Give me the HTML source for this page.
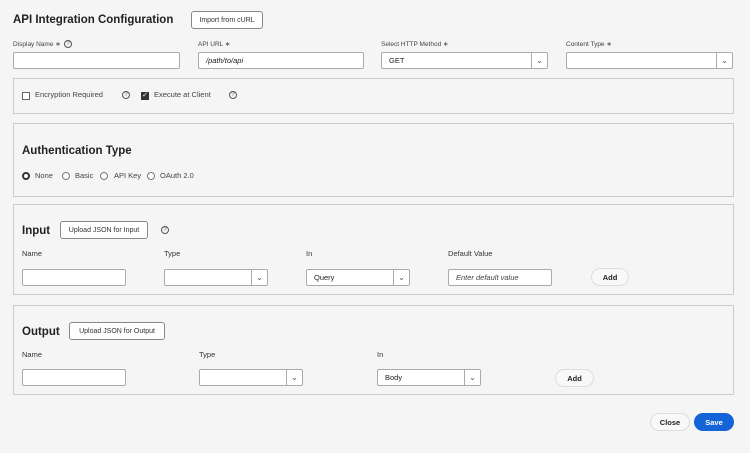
<!DOCTYPE html><html><head><style>
*{box-sizing:border-box;margin:0;padding:0}
body{width:750px;height:453px;background:#f5f5f5;font-family:"Liberation Sans",sans-serif;color:#222;position:relative;overflow:hidden}
.a{position:absolute}
.lbl{position:absolute;font-size:6.5px;color:#444}
.lbl2{position:absolute;font-size:7.5px;color:#333}
.in{position:absolute;background:#fff;border:1px solid #aaa;border-radius:2px;font-size:7.5px;padding-left:7px;display:flex;align-items:center;color:#222}
.sel .sp{position:absolute;right:0;top:0;bottom:0;width:16px;border-left:1px solid #aaa;display:flex;align-items:center;justify-content:center;font-size:8px;color:#555}
.box{position:absolute;left:13px;width:721px;border:1px solid #ccc;}
.btn{position:absolute;background:#fff;border:1px solid #888;border-radius:3px;font-size:7px;display:flex;align-items:center;justify-content:center;color:#333;white-space:nowrap}
.pill{position:absolute;background:#f8f8f8;border:1px solid #ddd;border-radius:10px;font-size:7.5px;font-weight:bold;display:flex;align-items:center;justify-content:center}
.h{position:absolute;font-weight:bold;white-space:nowrap}
.q{position:absolute;width:8px;height:8px;border:1px solid #555;border-radius:50%;font-size:6px;line-height:6px;text-align:center;color:#555}
.rad{position:absolute;width:8px;height:8px;border:1px solid #777;border-radius:50%;background:#fff}
.rt{position:absolute;font-size:7.5px;color:#444;white-space:nowrap}
</style></head><body>
<div class="h" style="left:13px;top:14px;font-size:11.5px">API Integration Configuration</div>
<div class="btn" style="left:191px;top:11px;width:72px;height:18px">Import from cURL</div>
<div class="lbl" style="left:13px;top:40px">Display Name ∗</div><div class="q" style="left:64px;top:40px">?</div>
<div class="lbl" style="left:198px;top:40px">API URL ∗</div>
<div class="lbl" style="left:381px;top:40px">Select HTTP Method ∗</div>
<div class="lbl" style="left:566px;top:40px">Content Type ∗</div>
<div class="in" style="left:13px;top:52px;width:167px;height:17px"></div>
<div class="in" style="left:198px;top:52px;width:166px;height:17px;font-style:italic">/path/to/api</div>
<div class="in sel" style="left:381px;top:52px;width:167px;height:17px">GET<span class="sp">⌄</span></div>
<div class="in sel" style="left:566px;top:52px;width:167px;height:17px"><span class="sp">⌄</span></div>

<div class="box" style="top:78px;height:36px"></div>
<div class="a" style="left:22px;top:92px;width:8px;height:8px;border:1px solid #666;background:#fff"></div>
<div class="rt" style="left:35px;top:90px">Encryption Required</div>
<div class="q" style="left:122px;top:91px">?</div>
<div class="a" style="left:141px;top:92px;width:8px;height:8px;background:#333;color:#fff;font-size:7px;line-height:8px;text-align:center">✓</div>
<div class="rt" style="left:154px;top:90px">Execute at Client</div>
<div class="q" style="left:229px;top:91px">?</div>

<div class="box" style="top:123px;height:74px"></div>
<div class="h" style="left:22px;top:145px;font-size:11.5px">Authentication Type</div>
<div class="rad" style="left:22px;top:172px;border:2.5px solid #333"></div><div class="rt" style="left:35px;top:171px">None</div>
<div class="rad" style="left:62px;top:172px"></div><div class="rt" style="left:75px;top:171px">Basic</div>
<div class="rad" style="left:100px;top:172px"></div><div class="rt" style="left:114px;top:171px">API Key</div>
<div class="rad" style="left:147px;top:172px"></div><div class="rt" style="left:160px;top:171px">OAuth 2.0</div>

<div class="box" style="top:204px;height:91px"></div>
<div class="h" style="left:22px;top:225px;font-size:11.5px">Input</div>
<div class="btn" style="left:60px;top:221px;width:88px;height:18px">Upload JSON for Input</div>
<div class="q" style="left:161px;top:226px">?</div>
<div class="lbl2" style="left:22px;top:249px">Name</div>
<div class="lbl2" style="left:164px;top:249px">Type</div>
<div class="lbl2" style="left:306px;top:249px">In</div>
<div class="lbl2" style="left:448px;top:249px">Default Value</div>
<div class="in" style="left:22px;top:269px;width:104px;height:17px"></div>
<div class="in sel" style="left:164px;top:269px;width:104px;height:17px"><span class="sp">⌄</span></div>
<div class="in sel" style="left:306px;top:269px;width:104px;height:17px">Query<span class="sp">⌄</span></div>
<div class="in" style="left:448px;top:269px;width:104px;height:17px;font-style:italic;color:#444">Enter default value</div>
<div class="pill" style="left:591px;top:268px;width:38px;height:18px">Add</div>

<div class="box" style="top:305px;height:90px"></div>
<div class="h" style="left:22px;top:326px;font-size:11.5px">Output</div>
<div class="btn" style="left:69px;top:322px;width:96px;height:18px">Upload JSON for Output</div>
<div class="lbl2" style="left:22px;top:350px">Name</div>
<div class="lbl2" style="left:199px;top:350px">Type</div>
<div class="lbl2" style="left:377px;top:350px">In</div>
<div class="in" style="left:22px;top:369px;width:104px;height:17px"></div>
<div class="in sel" style="left:199px;top:369px;width:104px;height:17px"><span class="sp">⌄</span></div>
<div class="in sel" style="left:377px;top:369px;width:104px;height:17px">Body<span class="sp">⌄</span></div>
<div class="pill" style="left:555px;top:369px;width:39px;height:18px">Add</div>

<div class="pill" style="left:650px;top:413px;width:40px;height:18px">Close</div>
<div class="pill" style="left:694px;top:413px;width:40px;height:18px;background:#1464d8;border-color:#1464d8;color:#fff">Save</div>
</body></html>
